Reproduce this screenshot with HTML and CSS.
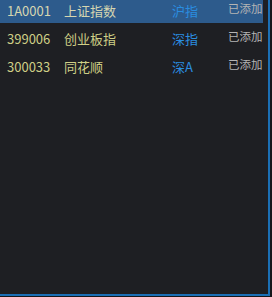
FILE: index.html
```html
<!DOCTYPE html>
<html lang="zh-CN">
<head>
    <meta charset="UTF-8">
    <title>自选股</title>
    <link rel="stylesheet" href="styles.css">
</head>
<body>
    <div class="panel">
        <div class="list">
            <div class="row selected">
                <span class="code">1A0001</span>
                <span class="name">上证指数</span>
                <span class="market">沪指</span>
                <span class="status">已添加</span>
            </div>
            <div class="row">
                <span class="code">399006</span>
                <span class="name">创业板指</span>
                <span class="market">深指</span>
                <span class="status">已添加</span>
            </div>
            <div class="row">
                <span class="code">300033</span>
                <span class="name">同花顺</span>
                <span class="market">深A</span>
                <span class="status">已添加</span>
            </div>
        </div>
    </div>
</body>
</html>
```

FILE: styles.css
```css
html, body {
    margin: 0;
    padding: 0;
    background-color: #16171a;
}
body {
    font-family: "Noto Sans CJK SC", "Noto Sans", sans-serif;
    font-size: 13px;
}
.panel {
    width: 268px;
    height: 294px;
    background-color: #1e1f23;
    border-right: 2px solid #1b6fb5;
    border-bottom: 2px solid #1b6fb5;
    overflow: hidden;
}
.list {
    width: 263px;
}
.row {
    display: flex;
    height: 28px;
    line-height: 22px;
    color: #cfcf86;
    white-space: nowrap;
}
.row.selected {
    height: 23px;
    margin-bottom: 5px;
    background-color: #2d5b8c;
    color: #d6d6b0;
}
.code {
    width: 57px;
    padding-left: 7px;
    flex-shrink: 0;
}
.name {
    width: 108px;
    flex-shrink: 0;
}
.market {
    width: 56px;
    color: #2a8de0;
    flex-shrink: 0;
}
.status {
    color: #b4b4b4;
    font-size: 11.5px;
    line-height: 17px;
}
```
